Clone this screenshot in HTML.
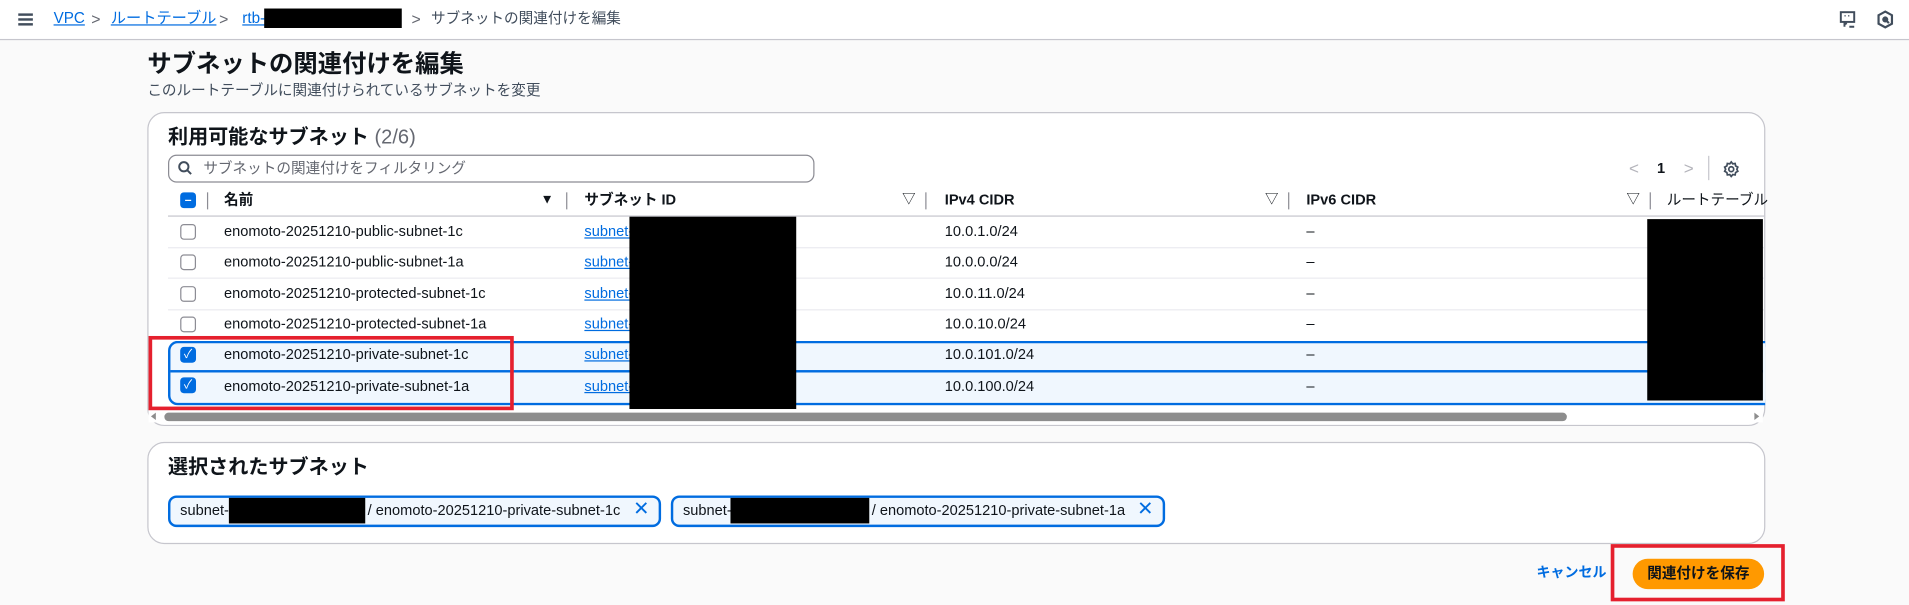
<!DOCTYPE html>
<html><head><meta charset="utf-8"><style>
html,body{margin:0;padding:0;width:1909px;height:605px;overflow:hidden;background:#fafafa}
#w{position:absolute;left:0;top:0;width:1568px;height:497px;transform:scale(1.21747,1.21730);transform-origin:0 0;font-family:"Liberation Sans","Noto Sans CJK JP",sans-serif;color:#0f141a;font-size:12px;line-height:15px}
.a{position:absolute;white-space:nowrap;line-height:15px}
.blk{position:absolute;background:#000}
.lnk{color:#006ce0;text-decoration:underline}
.cb{position:absolute;width:11px;height:11px;border:1.3px solid #8c8c94;border-radius:3px;background:#fff}
.cbs{position:absolute;width:13px;height:13px;border-radius:3px;background:#006ce0;color:#fff;font-size:10px;line-height:13px;text-align:center}
.vd{position:absolute;width:1px;height:14px;background:#8c8c94}
.hl{position:absolute;height:1px;background:#ebebf0}
.th{font-weight:bold}
</style></head><body><div id="w">
<!-- top bar -->
<div class="a" style="left:0;top:0;width:1568px;height:32px;background:#fff;border-bottom:1px solid #c6c6cd"></div>
<div class="a" style="left:15px;top:11px;width:12px;height:2px;background:#414d5c;box-shadow:0 4px 0 #414d5c,0 8px 0 #414d5c"></div>
<div class="a lnk" style="left:44px;top:8px;font-size:12.5px">VPC</div>
<div class="a" style="left:75px;top:8px;color:#656871;font-size:13px">&gt;</div>
<div class="a lnk" style="left:91px;top:8px;font-size:12.5px">ルートテーブル</div>
<div class="a" style="left:180px;top:8px;color:#656871;font-size:13px">&gt;</div>
<div class="a lnk" style="left:199px;top:8px;font-size:12.5px">rtb-</div>
<div class="blk" style="left:217px;top:7px;width:113px;height:16px"></div>
<div class="a" style="left:338px;top:8px;color:#656871;font-size:13px">&gt;</div>
<div class="a" style="left:354px;top:8px;font-size:12px;color:#414d5c">サブネットの関連付けを編集</div>
<svg class="a" style="left:1510px;top:8px" width="16" height="16" viewBox="0 0 16 16" fill="none" stroke="#414d5c" stroke-width="1.6"><rect x="2" y="2" width="11" height="8"/><path d="M5 10v4M5 12l2-1M9 14h4"/><path d="M5 5h1M8 5h1M11 5h0" stroke-width="1.2"/></svg>
<svg class="a" style="left:1541px;top:8px" width="15" height="16" viewBox="0 0 15 16" fill="none" stroke="#414d5c" stroke-width="1.8"><path d="M7.5 1.5l5.5 3v7l-5.5 3-5.5-3v-7z"/><circle cx="7.5" cy="8" r="1.6" fill="#414d5c"/><path d="M8.5 9l2 2"/></svg>

<!-- header -->
<div class="a" style="left:121px;top:42px;font-size:20px;line-height:22px;font-weight:bold">サブネットの関連付けを編集</div>
<div class="a" style="left:121px;top:67px;font-size:12px;color:#414d5c">このルートテーブルに関連付けられているサブネットを変更</div>

<!-- card 1 -->
<div class="a" style="left:121px;top:92px;width:1327px;height:256px;background:#fff;border:1px solid #c6c6cd;border-radius:14px"></div>
<div class="a" style="left:138px;top:104px;font-size:16.5px;line-height:19px;font-weight:bold">利用可能なサブネット <span style="font-weight:normal;color:#656871">(2/6)</span></div>
<div class="a" style="left:138px;top:127px;width:529px;height:21px;border:1px solid #8c8c94;border-radius:7px;background:#fff"></div>
<svg class="a" style="left:146px;top:132px" width="12" height="12" viewBox="0 0 12 12" fill="none" stroke="#414d5c" stroke-width="1.6"><circle cx="5" cy="5" r="3.8"/><path d="M7.8 7.8L11 11"/></svg>
<div class="a" style="left:167px;top:131px;font-size:12px;color:#656871">サブネットの関連付けをフィルタリング</div>
<div class="a" style="left:1338px;top:131px;color:#b4b4bb;font-size:14px">&lt;</div>
<div class="a" style="left:1361px;top:131px;font-weight:bold;font-size:12px">1</div>
<div class="a" style="left:1383px;top:131px;color:#b4b4bb;font-size:14px">&gt;</div>
<div class="vd" style="left:1403px;top:128px;height:20px;background:#c6c6cd"></div>
<svg class="a" style="left:1415px;top:132px" width="14" height="14" viewBox="0 0 14 14" fill="none" stroke="#414d5c" stroke-width="1.4"><path d="M7 1l1.2 1.6 2-.3.4 2 1.8 1L11.6 7l.8 1.7-1.8 1-.4 2-2-.3L7 13l-1.2-1.6-2 .3-.4-2-1.8-1L2.4 7l-.8-1.7 1.8-1 .4-2 2 .3z"/><circle cx="7" cy="7" r="2"/></svg>

<!-- header row -->
<div class="cbs" style="left:148px;top:158px;font-weight:bold">–</div>
<div class="vd" style="left:170px;top:158px"></div>
<div class="a th" style="left:184px;top:157px">名前</div>
<div class="a" style="left:444px;top:157px;font-size:11px">▼</div>
<div class="vd" style="left:465px;top:158px"></div>
<div class="a th" style="left:480px;top:157px">サブネット ID</div>
<div class="a" style="left:741px;top:157px;font-size:11px">▽</div>
<div class="vd" style="left:760px;top:158px"></div>
<div class="a th" style="left:776px;top:157px">IPv4 CIDR</div>
<div class="a" style="left:1039px;top:157px;font-size:11px">▽</div>
<div class="vd" style="left:1058px;top:158px"></div>
<div class="a th" style="left:1073px;top:157px">IPv6 CIDR</div>
<div class="a" style="left:1336px;top:157px;font-size:11px">▽</div>
<div class="vd" style="left:1355px;top:158px"></div>
<div class="a" style="left:1369px;top:157px">ルートテーブル</div>
<div class="hl" style="left:138px;top:177px;width:1311px;background:#c6c6cd"></div>

<!-- selected rows bg -->
<div class="a" style="left:138px;top:280px;width:1310px;height:49px;background:#f0f7fe;border:2px solid #006ce0;border-right:none;border-radius:8px 0 0 8px"></div>
<div class="a" style="left:140px;top:304px;width:1308px;height:2px;background:#006ce0"></div>

<div class="hl" style="left:138px;top:203px;width:1311px"></div>
<div class="hl" style="left:138px;top:228px;width:1311px"></div>
<div class="hl" style="left:138px;top:254px;width:1311px"></div>

<!-- rows -->
<div class="cb" style="left:148px;top:184px"></div>
<div class="a" style="left:184px;top:183px">enomoto-20251210-public-subnet-1c</div>
<div class="a lnk" style="left:480px;top:183px">subnet-</div>
<div class="a" style="left:776px;top:183px">10.0.1.0/24</div>
<div class="a" style="left:1073px;top:183px">–</div>

<div class="cb" style="left:148px;top:209px"></div>
<div class="a" style="left:184px;top:208px">enomoto-20251210-public-subnet-1a</div>
<div class="a lnk" style="left:480px;top:208px">subnet-</div>
<div class="a" style="left:776px;top:208px">10.0.0.0/24</div>
<div class="a" style="left:1073px;top:208px">–</div>

<div class="cb" style="left:148px;top:235px"></div>
<div class="a" style="left:184px;top:234px">enomoto-20251210-protected-subnet-1c</div>
<div class="a lnk" style="left:480px;top:234px">subnet-</div>
<div class="a" style="left:776px;top:234px">10.0.11.0/24</div>
<div class="a" style="left:1073px;top:234px">–</div>

<div class="cb" style="left:148px;top:260px"></div>
<div class="a" style="left:184px;top:259px">enomoto-20251210-protected-subnet-1a</div>
<div class="a lnk" style="left:480px;top:259px">subnet-</div>
<div class="a" style="left:776px;top:259px">10.0.10.0/24</div>
<div class="a" style="left:1073px;top:259px">–</div>

<div class="cbs" style="left:148px;top:285px">✓</div>
<div class="a" style="left:184px;top:284px">enomoto-20251210-private-subnet-1c</div>
<div class="a lnk" style="left:480px;top:284px">subnet-</div>
<div class="a" style="left:776px;top:284px">10.0.101.0/24</div>
<div class="a" style="left:1073px;top:284px">–</div>

<div class="cbs" style="left:148px;top:310px">✓</div>
<div class="a" style="left:184px;top:310px">enomoto-20251210-private-subnet-1a</div>
<div class="a lnk" style="left:480px;top:310px">subnet-</div>
<div class="a" style="left:776px;top:310px">10.0.100.0/24</div>
<div class="a" style="left:1073px;top:310px">–</div>

<div class="blk" style="left:517px;top:178px;width:137px;height:158px"></div>
<div class="blk" style="left:1353px;top:180px;width:95px;height:149px"></div>

<!-- scrollbar -->
<div class="a" style="left:122px;top:337px;width:1326px;height:10px;background:#fff"></div>
<div class="a" style="left:124px;top:339px;width:0;height:0;border:3.5px solid transparent;border-right:4px solid #8d8d8d;border-left:none"></div>
<div class="a" style="left:135px;top:339px;width:1152px;height:7px;border-radius:4px;background:#8d8d8d"></div>
<div class="a" style="left:1441px;top:339px;width:0;height:0;border:3.5px solid transparent;border-left:4px solid #8d8d8d;border-right:none"></div>

<div class="a" style="left:122px;top:276px;width:294px;height:55px;border:3px solid #e5202e"></div>

<!-- card 2 -->
<div class="a" style="left:121px;top:363px;width:1327px;height:82px;background:#fff;border:1px solid #c6c6cd;border-radius:14px"></div>
<div class="a" style="left:138px;top:375px;font-size:16.5px;line-height:19px;font-weight:bold">選択されたサブネット</div>
<div class="a" style="left:138px;top:407px;width:401px;height:22px;border:2px solid #006ce0;border-radius:7px;background:#f0f7fe"></div>
<div class="a" style="left:148px;top:412px;font-size:12px">subnet-</div>
<div class="blk" style="left:188px;top:409px;width:112px;height:21px"></div>
<div class="a" style="left:302px;top:412px;font-size:12px">/ enomoto-20251210-private-subnet-1c</div>
<div class="a" style="left:520px;top:411px;font-size:16px;color:#006ce0">✕</div>
<div class="a" style="left:551px;top:407px;width:402px;height:22px;border:2px solid #006ce0;border-radius:7px;background:#f0f7fe"></div>
<div class="a" style="left:561px;top:412px;font-size:12px">subnet-</div>
<div class="blk" style="left:600px;top:409px;width:114px;height:21px"></div>
<div class="a" style="left:716px;top:412px;font-size:12px">/ enomoto-20251210-private-subnet-1a</div>
<div class="a" style="left:934px;top:411px;font-size:16px;color:#006ce0">✕</div>

<!-- footer -->
<div class="a" style="left:1262px;top:464px;font-weight:bold;color:#006ce0;font-size:11.5px">キャンセル</div>
<div class="a" style="left:1341px;top:459px;width:108px;height:25px;border-radius:13px;background:#ff9900;text-align:center;line-height:25px;font-weight:bold;font-size:12px">関連付けを保存</div>
<div class="a" style="left:1323px;top:447px;width:137px;height:41px;border:3px solid #e5202e"></div>
</div></body></html>
